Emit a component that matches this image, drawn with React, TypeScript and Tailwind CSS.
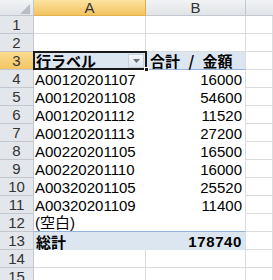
const rows: { label: string; value: string }[] = [
  { label: "A00120201107", value: "16000" },
  { label: "A00120201108", value: "54600" },
  { label: "A00120201112", value: "11520" },
  { label: "A00120201113", value: "27200" },
  { label: "A00220201105", value: "16500" },
  { label: "A00220201110", value: "16000" },
  { label: "A00320201105", value: "25520" },
  { label: "A00320201109", value: "11400" },
  { label: "(空白)", value: "" },
];

const font = "font-['Liberation_Sans','Noto_Sans_CJK_JP',sans-serif]";

function RowHead({ n, active }: { n: number; active?: boolean }) {
  return (
    <div
      className={`flex items-center justify-center border-r border-b border-[#c4c8ce] text-[15px] text-[#333] ${
        active ? "bg-gradient-to-b from-[#f9dc8e] to-[#f2c563]" : "bg-[#e3e6ea]"
      }`}
    >
      {n}
    </div>
  );
}

function Grid({ className = "" }: { className?: string }) {
  return <div className={`border-r border-b border-[#dadcdd] bg-white ${className}`} />;
}

export default function App() {
  return (
    <div className={`w-[273px] h-[280px] overflow-hidden bg-white ${font}`}>
      <div className="grid grid-cols-[34px_112px_100px_27px] grid-rows-[16px_repeat(15,18px)] leading-none">
        {/* column headers */}
        <div className="relative border-r border-b border-[#c4c8ce] bg-gradient-to-b from-[#f1f3f5] to-[#e1e4e8]">
          <svg className="absolute left-[20px] top-[4px]" width="10" height="10" viewBox="0 0 10 10">
            <polygon points="10,0 10,10 0,10" fill="#b9bec5" />
          </svg>
        </div>
        <div className="flex items-center justify-center border-r border-b border-[#e0b04a] bg-gradient-to-b from-[#fbe39f] to-[#f2c35f] text-[15px] text-[#333]">
          A
        </div>
        <div className="flex items-center justify-center border-r border-b border-[#c4c8ce] bg-gradient-to-b from-[#f1f3f5] to-[#e1e4e8] text-[15px] text-[#333]">
          B
        </div>
        <div className="border-b border-[#c4c8ce] bg-gradient-to-b from-[#f1f3f5] to-[#e1e4e8]" />

        {/* rows 1-2 */}
        {[1, 2].map((n) => (
          <div key={n} className="contents">
            <RowHead n={n} />
            <Grid />
            <Grid />
            <Grid />
          </div>
        ))}

        {/* row 3 pivot header */}
        <RowHead n={3} active />
        <div className="relative flex items-center bg-[#dce6f1] border-b border-[#95b3d7]">
          <div className="absolute -left-[1px] -top-[1px] -right-[1px] -bottom-[1px] border-2 border-[#1a1a1a] pointer-events-none" />
          <span className="pl-[2px] text-[15px] font-bold text-black font-['Noto_Sans_CJK_JP',sans-serif]">
            行ラベル
          </span>
          <div className="absolute right-[2px] top-[2px] w-[16px] h-[14px] flex items-center justify-center bg-gradient-to-b from-[#f4f6f9] to-[#dfe5ee] border border-[#c9d1dc]">
            <svg width="7" height="4" viewBox="0 0 7 4">
              <polygon points="0,0 7,0 3.5,4" fill="#6d7178" />
            </svg>
          </div>
          <div className="absolute -right-[3px] -bottom-[3px] w-[5px] h-[5px] bg-[#1a1a1a] border border-white z-10" />
        </div>
        <div className="flex items-center bg-[#dce6f1] border-r border-b border-r-[#dadcdd] border-b-[#95b3d7]">
          <span className="pl-[4px] text-[15px] font-bold text-black font-['Noto_Sans_CJK_JP',sans-serif] [word-spacing:5px]">
            合計 / 金額
          </span>
        </div>
        <Grid />

        {/* data rows 4-12 */}
        {rows.map((r, i) => (
          <div key={r.label} className="contents">
            <RowHead n={i + 4} />
            <div
              className={`flex items-center bg-white pl-[1px] text-[15px] text-black ${
                i === rows.length - 1 ? "border-b border-[#95b3d7]" : ""
              }`}
            >
              {r.label}
            </div>
            <div
              className={`flex items-center justify-end border-r border-[#dadcdd] bg-white pr-[3px] text-[15px] text-black ${
                i === rows.length - 1 ? "border-b border-b-[#95b3d7]" : ""
              }`}
            >
              {r.value}
            </div>
            <Grid />
          </div>
        ))}

        {/* row 13 total */}
        <RowHead n={13} />
        <div className="flex items-center bg-[#dce6f1] pl-[2px]">
          <span className="text-[15px] font-bold text-black font-['Noto_Sans_CJK_JP',sans-serif]">総計</span>
        </div>
        <div className="flex items-center justify-end border-r border-[#dadcdd] bg-[#dce6f1] pr-[3px] text-[15px] font-bold tracking-[0.6px] text-black">
          178740
        </div>
        <Grid />

        {/* rows 14-15 */}
        {[14, 15].map((n) => (
          <div key={n} className="contents">
            <RowHead n={n} />
            <Grid />
            <Grid />
            <Grid />
          </div>
        ))}
      </div>
    </div>
  );
}
